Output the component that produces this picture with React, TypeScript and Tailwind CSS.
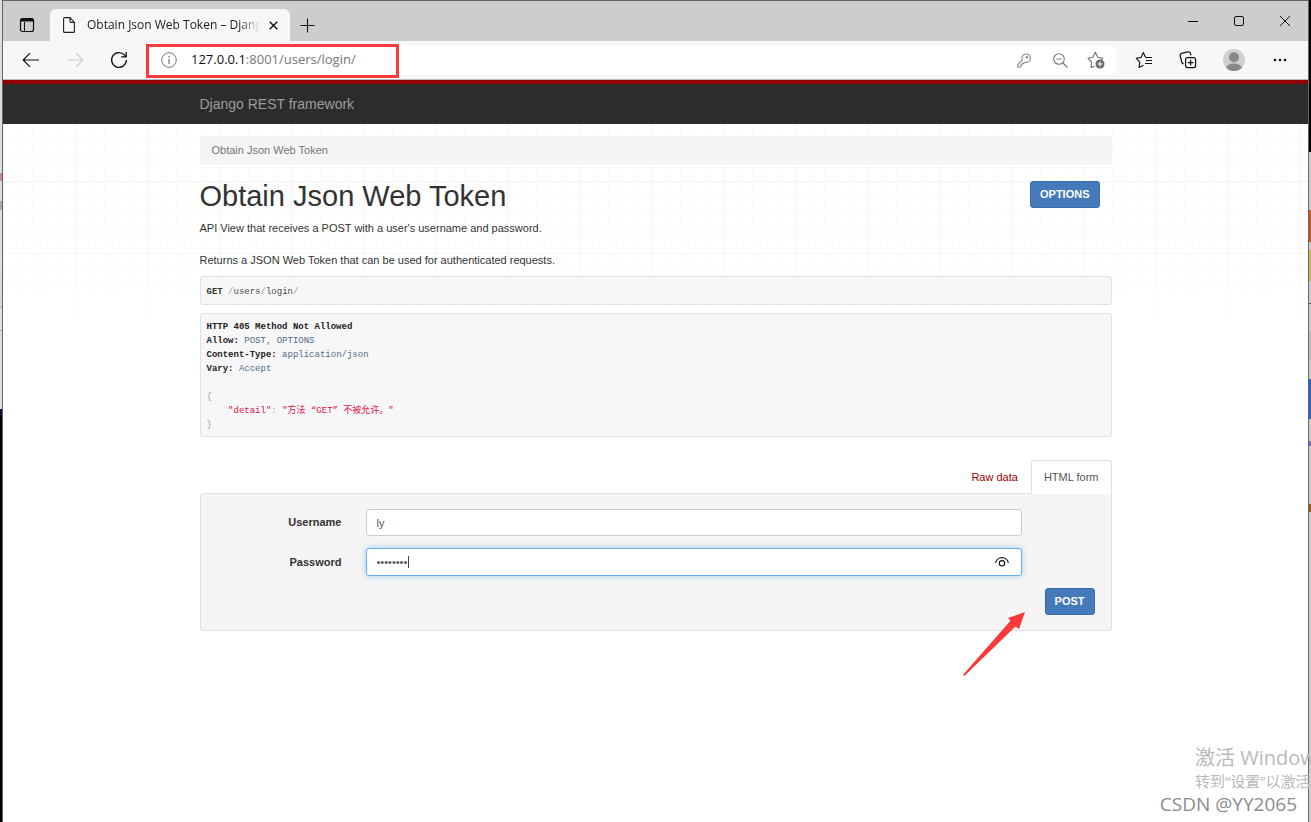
import React, { useState } from 'react'

const leftEdge = [
  { height: 'h-[173px]', color: 'bg-[#dedede]' },
  { height: 'h-[8px]', color: 'bg-[#c9879b]' },
  { height: 'h-[20px]', color: 'bg-[#dedede]' },
  { height: 'h-[9px]', color: 'bg-[#a9a9a9]' },
  { height: 'h-[63px]', color: 'bg-[#dedede]' },
  { height: 'h-[34px]', color: 'bg-[#d3dadb]' },
  { height: 'h-[1px]', color: 'bg-[#8fb6d6]' },
  { height: 'h-[22px]', color: 'bg-[#dde1e3]' },
  { height: 'h-[1px]', color: 'bg-[#8fb6d6]' },
  { height: 'h-[78px]', color: 'bg-[#dedede]' },
  { height: 'h-[6px]', color: 'bg-[#03123f]' },
  { height: 'flex-1', color: 'bg-black' },
]

const rightEdge = [
  { height: 'h-[152px]', color: 'bg-black' },
  { height: 'h-[58px]', color: 'bg-[#cfcdcd]' },
  { height: 'h-[32px]', color: 'bg-[#cb5527]' },
  { height: 'h-[8px]', color: 'bg-[#cfcdcd]' },
  { height: 'h-[31px]', color: 'bg-[#c5b55b]' },
  { height: 'h-[22px]', color: 'bg-[#cfcdcd]' },
  { height: 'h-[1px]', color: 'bg-[#555]' },
  { height: 'h-[27px]', color: 'bg-[#cfcdcd]' },
  { height: 'h-[29px]', color: 'bg-[#bcbcbc]' },
  { height: 'h-[19px]', color: 'bg-[#cfcdcd]' },
  { height: 'h-[40px]', color: 'bg-[#2f5fc8]' },
  { height: 'h-[22px]', color: 'bg-[#cfcdcd]' },
  { height: 'h-[5px]', color: 'bg-[#8268c0]' },
  { height: 'h-[58px]', color: 'bg-[#cfcdcd]' },
  { height: 'h-[8px]', color: 'bg-[#9a5a1e]' },
  { height: 'flex-1', color: 'bg-[#cfcfcf]' },
]

const TitleBar = () => {
  return (
    <div className="flex h-10 items-end bg-[#cdcdcd] font-['Open_Sans',sans-serif]">
      <button aria-label="Tab actions" className="flex h-8 w-[47px] items-center justify-center">
        <svg width="16" height="16" viewBox="0 0 16 16" fill="none" stroke="#111">
          <rect x="1.5" y="1.5" width="13" height="13" rx="2" strokeWidth="1.2" />
          <path d="M1.5 3.5h13M2 2.5h12" strokeWidth="2" />
          <path d="M5.5 5v9" />
        </svg>
      </button>
      <div className="flex h-8 w-60 items-center gap-3 rounded-t-md bg-[#f7f7f7] pl-[13px] pr-1">
        <svg className="shrink-0" width="12" height="16" viewBox="0 0 12 16" fill="none" stroke="#222" strokeWidth="1.1">
          <path d="M.6 1.6q0-1 1-1H7l4.400 4.800v9q0 1-1 1H1.600q-1 0-1-1z" />
          <path d="M7 .6v3.800q0 1 1 1h3.400" />
        </svg>
        <div className="flex min-w-0 flex-1 items-center">
          <span className="min-w-0 flex-1 overflow-hidden whitespace-nowrap text-xs text-[#1b1b1b] [mask-image:linear-gradient(to_right,black_88%,transparent)]">
            Obtain Json Web Token – Django
          </span>
          <button aria-label="Close tab" className="flex h-6 w-[26px] shrink-0 items-center justify-center">
            <svg width="9" height="9" viewBox="0 0 9 9" stroke="#111" strokeWidth="1.4">
              <path d="M.7.7l7.600 7.600M8.300.7L.7 8.300" />
            </svg>
          </button>
        </div>
      </div>
      <button aria-label="New tab" className="flex h-8 w-[35px] items-center justify-center">
        <svg width="15" height="15" viewBox="0 0 15 15" stroke="#111" strokeWidth="1.1">
          <path d="M7.500.5v14M.5 7.500h14" />
        </svg>
      </button>
      <div className="ml-auto flex h-10">
        <button aria-label="Minimize" className="flex w-[46px] items-center justify-center">
          <svg width="10" height="10" viewBox="0 0 10 10" stroke="#111">
            <path d="M0 5.500h10" />
          </svg>
        </button>
        <button aria-label="Maximize" className="flex w-[46px] items-center justify-center">
          <svg width="10" height="10" viewBox="0 0 10 10" fill="none" stroke="#111">
            <rect x=".5" y=".5" width="9" height="9" rx="1.500" />
          </svg>
        </button>
        <button aria-label="Close" className="flex w-[46px] items-center justify-center">
          <svg width="10" height="10" viewBox="0 0 10 10" stroke="#111">
            <path d="M0 0l10 10M10 0L0 10" />
          </svg>
        </button>
      </div>
    </div>
  )
}

const Toolbar = () => {
  const [url, setUrl] = useState('127.0.0.1:8001/users/login/')
  const colon = url.indexOf(':')
  const host = colon > 0 ? url.slice(0, colon) : url
  const rest = colon > 0 ? url.slice(colon) : ''

  return (
    <div className="flex h-[39px] items-center border-b border-[#bdbdbd] bg-[#f7f7f7] px-1.5">
      <button aria-label="Back" className="flex h-8 w-11 items-center justify-center">
        <svg width="18" height="16" viewBox="0 0 18 16" fill="none" stroke="#111" strokeWidth="1.2">
          <path d="M17 8H1.500M8 1.200L1.200 8 8 14.800" />
        </svg>
      </button>
      <button aria-label="Forward" className="flex h-8 w-11 items-center justify-center">
        <svg width="18" height="16" viewBox="0 0 18 16" fill="none" stroke="#cdcdcd" strokeWidth="1.2">
          <path d="M1 8h15.500M10 1.200L16.800 8 10 14.800" />
        </svg>
      </button>
      <button aria-label="Refresh" className="flex h-8 w-11 items-center justify-center">
        <svg width="18" height="18" viewBox="0 0 18 18" fill="none" stroke="#111" strokeWidth="1.3">
          <path d="M16.400 9A7.400 7.400 0 1 1 14.600 4.100L16 5.800" />
          <path d="M16.200 1v4.900h-5" />
        </svg>
      </button>

      {/* Address bar */}
      <div className="relative ml-1.5 mr-1.5 flex h-[30px] min-w-0 flex-1 items-center rounded-md bg-white pr-0.5">
        <button aria-label="View site information" className="flex h-8 w-11 shrink-0 items-center justify-center">
          <svg width="16" height="16" viewBox="0 0 16 16" fill="none" stroke="#757575">
            <circle cx="8" cy="8" r="7.300" />
            <path d="M8 7v5M8 4v1.500" strokeWidth="1.200" />
          </svg>
        </button>
        <label className="relative flex h-full min-w-0 flex-1 items-center font-['Open_Sans',sans-serif] text-[13px]">
          <span aria-hidden="true" className="pointer-events-none truncate text-[#777]">
            <span className="text-[#111]">{host}</span>
            {rest}
          </span>
          <input
            aria-label="Address"
            value={url}
            onChange={(e) => setUrl(e.target.value)}
            className="absolute inset-0 w-full bg-transparent text-transparent caret-black outline-none"
          />
        </label>
        <button aria-label="Passwords" className="flex h-8 w-9 items-center justify-center">
          <svg width="14" height="15" viewBox="0 0 14 15" fill="none" stroke="#8a8a8a" strokeWidth="1.1">
            <path d="M5.400 6.900A4.200 4.200 0 1 1 8 9.200L6.800 10.400H5.300v1.600H3.800v1.500l-.6.700H.8v-2.400z" />
            <circle cx="10" cy="4.300" r=".8" />
          </svg>
        </button>
        <button aria-label="Zoom out" className="flex h-8 w-9 items-center justify-center">
          <svg width="15" height="15" viewBox="0 0 15 15" fill="none" stroke="#777" strokeWidth="1.1">
            <circle cx="6" cy="6" r="5.300" />
            <path d="M10 10l4.500 4.500M3.500 6h5" />
          </svg>
        </button>
        <button aria-label="Add to favorites" className="flex h-8 w-9 items-center justify-center">
          <svg width="18" height="18" viewBox="0 0 18 18" fill="none">
            <path
              d="M7.500 15.200L4 16.400l.6-5L1 7.200l4.900-.9L8.300 1.200l2.500 5.100 5 .9-1.500 1.600"
              stroke="#6e6e6e"
              strokeWidth="1.1"
              strokeLinejoin="round"
            />
            <circle cx="13" cy="13" r="4.500" fill="#6a6a6a" />
            <path d="M13 10.500v5M10.500 13h5" stroke="#fff" strokeWidth="1.1" />
          </svg>
        </button>
        {/* Highlight frame */}
        <div className="pointer-events-none absolute -left-px -top-px h-[34px] w-[253px] border-3 border-[#fa3a3c]" />
      </div>

      <button aria-label="Favorites" className="flex h-8 w-11 items-center justify-center">
        <svg width="18" height="18" viewBox="0 0 18 18" fill="none" stroke="#111" strokeWidth="1.1" strokeLinejoin="round">
          <path d="M8.500 14.200L4 16.500l.8-5.200L1.200 7.200l4.900-.8L8.300 1.500l2.200 4.700 2.800.500" />
          <path d="M11.500 6.500h5.500M11 9.500h6M10 12.500h7" />
        </svg>
      </button>
      <button aria-label="Collections" className="flex h-8 w-11 items-center justify-center">
        <svg width="18" height="18" viewBox="0 0 18 18" fill="none" stroke="#111" strokeWidth="1.2">
          <rect x="6.600" y="6.600" width="10" height="10" rx="2" />
          <path d="M11.600 8.800v5.600M8.800 11.600h5.600" />
          <path d="M4.500 13L3 11.800 1.200 5q-.4-2 1.400-2.600l6.200-1.500q2-.4 2.600 1.200l.5 2.200" />
        </svg>
      </button>
      <button aria-label="Profile" className="flex h-8 w-12 items-center justify-center">
        <svg width="22" height="22" viewBox="0 0 22 22">
          <clipPath id="avatar">
            <circle cx="11" cy="11" r="11" />
          </clipPath>
          <g clipPath="url(#avatar)">
            <rect width="22" height="22" fill="#d1cfcd" />
            <circle cx="11" cy="8.300" r="5" fill="#8a8886" />
            <ellipse cx="11" cy="19.500" rx="8" ry="5" fill="#8a8886" />
          </g>
        </svg>
      </button>
      <button aria-label="Settings and more" className="flex h-8 w-11 items-center justify-center">
        <svg width="14" height="4" viewBox="0 0 14 4" fill="#111">
          <circle cx="2" cy="2" r="1.300" />
          <circle cx="7" cy="2" r="1.300" />
          <circle cx="12" cy="2" r="1.300" />
        </svg>
      </button>
    </div>
  )
}

const ResponseInfo = () => {
  return (
    <>
      <pre className="mt-2 overflow-hidden rounded-[3px] border border-[#e1e1e8] bg-[#f7f7f9] px-1.5 pb-1 pt-2 font-['Liberation_Mono',monospace] text-[9px] leading-[15px] text-[#48484c]">
        <b className="text-[#333]">GET</b> <span className="text-[#93a1a1]">/</span>users<span className="text-[#93a1a1]">/</span>login<span className="text-[#93a1a1]">/</span>
      </pre>
      <pre className="mt-2 overflow-hidden rounded-[3px] border border-[#e1e1e8] bg-[#f7f7f9] px-1.5 pb-1 pt-1.5 font-['Liberation_Mono','Noto_Sans_CJK_SC',monospace] text-[9px] leading-[14px] text-[#93a1a1]">
        <b className="block text-[#222]">HTTP 405 Method Not Allowed</b>
        <span className="block text-[#4f6b87]"><b className="text-[#222]">Allow:</b> POST, OPTIONS</span>
        <span className="block text-[#4f6b87]"><b className="text-[#222]">Content-Type:</b> application/json</span>
        <span className="block text-[#4f6b87]"><b className="text-[#222]">Vary:</b> Accept</span>
        <span className="block h-[14px]" />
        <span className="block">{'{'}</span>
        <span className="block h-[14px]">
          {'    '}<span className="text-[#d14]">"detail"</span>: <span className="text-[#d14]">"方法 “GET” 不被允许。"</span>
        </span>
        <span className="block">{'}'}</span>
      </pre>
    </>
  )
}

const LoginForm = () => {
  const [username, setUsername] = useState('ly')
  const [password, setPassword] = useState('password')
  const [showPassword, setShowPassword] = useState(false)

  return (
    <form
      onSubmit={(e) => e.preventDefault()}
      className="relative rounded-[3px] rounded-tr-none border border-[#e0e0e0] bg-[#f5f5f5] py-[15px]"
    >
      <div className="flex items-center pr-[89px]">
        <label htmlFor="username" className="w-[141px] text-right font-bold">Username</label>
        <input
          id="username"
          value={username}
          onChange={(e) => setUsername(e.target.value)}
          className="ml-6 h-[27px] min-w-0 flex-1 rounded-[3px] border border-[#ccc] bg-white px-2.5 text-[#555] outline-none"
        />
      </div>
      <div className="mt-3 flex items-center pr-[89px]">
        <label htmlFor="password" className="w-[141px] text-right font-bold">Password</label>
        <div className="relative ml-6 flex min-w-0 flex-1">
          <input
            id="password"
            type={showPassword ? 'text' : 'password'}
            value={password}
            onChange={(e) => setPassword(e.target.value)}
            className="h-7 w-full rounded-[3px] border border-[#66afe9] bg-white pl-2.5 pr-8 text-[#555] shadow-[0_0_6px_rgba(102,175,233,0.6)] outline-none"
          />
          <span className="absolute left-[42px] top-2 h-3 w-px bg-[#444]" />
          <button
            type="button"
            aria-label="Show password"
            onClick={() => setShowPassword(!showPassword)}
            className="absolute right-3 top-2 flex h-3 w-4 items-center justify-center"
          >
            <svg width="14" height="10" viewBox="0 0 14 10" fill="none" stroke="#111" strokeWidth="1.1">
              <path d="M.6 6A6.500 6.500 0 0 1 13.400 6" />
              <circle cx="7" cy="6.300" r="2.700" />
            </svg>
          </button>
        </div>
      </div>
      <div className="mt-3 flex justify-end pr-4">
        <button className="h-[27px] rounded-[3px] border border-[#3d6da8] bg-[#4479ba] px-[9px] font-bold text-white">
          POST
        </button>
      </div>

      {/* Arrow pointing at the POST button */}
      <svg className="pointer-events-none absolute right-[85px] top-[117px]" width="64" height="66" viewBox="0 0 64 66" fill="#fa3a38">
        <path d="M63 1L46 7l2.500 2.700L1 63.700 2.300 65l51.200-49.500L57 18z" />
      </svg>
    </form>
  )
}

const ApiPage = () => {
  return (
    <div className="relative font-['Liberation_Sans',sans-serif] text-[11px] text-[#333]">
      {/* Grid background */}
      <div className="absolute inset-x-0 top-0 h-[210px] bg-[linear-gradient(to_right,#f2f2f2_1px,transparent_1px_14px,#f9f9f9_14px_15px,transparent_15px_29px,#f9f9f9_29px_30px,transparent_30px_43px,#f9f9f9_43px_44px,transparent_44px_58px,#f9f9f9_58px_59px,transparent_59px),linear-gradient(#f2f2f2_1px,transparent_1px_14px,#f9f9f9_14px_15px,transparent_15px_29px,#f9f9f9_29px_30px,transparent_30px_43px,#f9f9f9_43px_44px,transparent_44px_58px,#f9f9f9_58px_59px,transparent_59px)] bg-size-[72px_72px] bg-position-[0_57px] [mask-image:linear-gradient(black_50%,transparent)]" />

      <div className="relative mx-auto max-w-[912px] pt-3">
        <div className="flex h-[29px] items-center rounded-[3px] bg-[#f5f5f5] px-3">
          <a href="#token" className="text-[#777]">Obtain Json Web Token</a>
        </div>

        <div className="mt-4 flex items-start justify-between pr-3">
          <h1 className="text-[29px] leading-[31px]">Obtain Json Web Token</h1>
          <button className="h-[27px] rounded-[3px] border border-[#3d6da8] bg-[#4479ba] px-[9px] font-bold text-white">
            OPTIONS
          </button>
        </div>
        <div className="mt-2 leading-4">
          <p>API View that receives a POST with a user's username and password.</p>
          <p className="mt-4">Returns a JSON Web Token that can be used for authenticated requests.</p>
        </div>

        <ResponseInfo />

        <div className="mt-[23px] flex justify-end">
          <a href="#raw" className="flex h-[33px] items-center px-[13px] pt-px text-[#900]">Raw data</a>
          <a
            href="#html"
            className="relative z-10 -mb-px flex h-[34px] items-center rounded-t-[3px] border border-b-0 border-[#ddd] bg-white px-3 text-[#555]"
          >
            HTML form
          </a>
        </div>
        <LoginForm />
      </div>
    </div>
  )
}

const App = () => {
  return (
    <div className="relative flex min-h-screen overflow-hidden bg-white">
      <div className="flex w-[3px] shrink-0 flex-col border-r border-[#666]">
        {leftEdge.map((part, i) => (
          <div key={i} className={`${part.height} ${part.color}`} />
        ))}
      </div>

      <div className="min-w-0 flex-1 border-t border-[#666]">
        <TitleBar />
        <Toolbar />
        <nav className="h-11 border-t-4 border-[#930000] bg-[#2c2c2c] font-['Liberation_Sans',sans-serif]">
          <div className="mx-auto flex h-full max-w-[912px] items-center">
            <a href="#home" className="text-sm text-[#9d9d9d]">Django REST framework</a>
          </div>
        </nav>
        <ApiPage />
      </div>

      <div className="flex w-[3px] shrink-0 flex-col border-l border-[#666]">
        {rightEdge.map((part, i) => (
          <div key={i} className={`${part.height} ${part.color}`} />
        ))}
      </div>

      {/* Watermarks */}
      <div className="pointer-events-none absolute bottom-1 right-0 flex flex-col items-end font-['Open_Sans','Noto_Sans_CJK_SC',sans-serif] text-[#b9b9b9]">
        <div className="w-[116px] overflow-hidden whitespace-nowrap">
          <p className="text-xl leading-7">激活 Window</p>
          <p className="text-[15px] leading-[18px]">转到“设置”以激活</p>
        </div>
        <p className="pr-3.5 text-[19px] leading-7 text-[#8c8c8c]">CSDN @YY2065</p>
      </div>
    </div>
  )
}

export default App
